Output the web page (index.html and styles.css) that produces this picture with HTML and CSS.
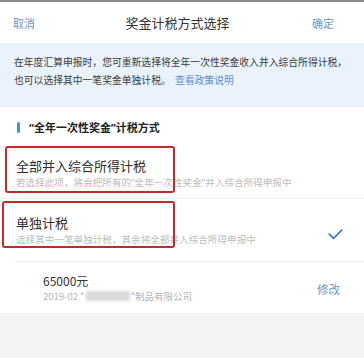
FILE: index.html
```html
<!DOCTYPE html>
<html lang="zh-CN">
<head>
<meta charset="utf-8">
<link rel="stylesheet" href="styles.css">
</head>
<body>
<div class="screen">
  <div class="topline"></div>
  <header class="navbar">
    <span class="nav-btn">取消</span>
    <span class="nav-title">奖金计税方式选择</span>
    <span class="nav-btn">确定</span>
  </header>
  <div class="notice">
    <div class="notice-line">在年度汇算申报时，您可重新选择将全年一次性奖金收入并入综合所得计税，</div>
    <div class="notice-line">也可以选择其中一笔奖金单独计税。 <span class="link">查看政策说明</span></div>
  </div>
  <div class="section-head">
    <span class="bar"></span>
    <span class="section-title"><span class="q">“</span>全年一次性奖金<span class="q">”</span>计税方式</span>
  </div>
  <div class="option option-first">
    <span class="mark mark-first"></span>
    <div class="opt-text">
      <div class="opt-title">全部并入综合所得计税</div>
      <div class="opt-sub">若选择此项，将会把所有的<span class="q">“</span>全年一次性奖金<span class="q">”</span>并入综合所得申报中</div>
    </div>
  </div>
  <div class="option option-second">
    <span class="mark mark-second"></span>
    <div class="opt-text">
      <div class="opt-title">单独计税</div>
      <div class="opt-sub">选择其中一笔单独计税，其余将全部并入综合所得申报中</div>
    </div>
    <svg class="check" width="15" height="11" viewBox="0 0 15 11"><path d="M1.2 5.2 L5.5 9.3 L13.8 1.2" fill="none" stroke="#3f7ab0" stroke-width="1.7" stroke-linecap="round" stroke-linejoin="round"/></svg>
  </div>
  <div class="item">
    <div class="item-text">
      <div class="amount">65000元</div>
      <div class="meta">2019-02 *<span class="blur"></span>*制品有限公司</div>
    </div>
    <span class="edit">修改</span>
  </div>
  <div class="footer-space"></div>
</div>
</body>
</html>
```
FILE: styles.css
```css
html, body {
  margin: 0;
  padding: 0;
  background: #ffffff;
}
.screen {
  width: 364px;
  height: 358px;
  overflow: hidden;
  font-family: "Noto Sans CJK SC", "Noto Sans", sans-serif;
  color: #333333;
  display: flex;
  flex-direction: column;
}
.q {
  font-family: "Noto Sans", "Liberation Sans", sans-serif;
}
.topline {
  height: 2px;
  background: #8d8d8d;
}
.navbar {
  height: 41px;
  display: flex;
  align-items: center;
  justify-content: space-between;
  padding: 0 30px 0 13px;
}
.nav-btn {
  font-size: 11px;
  color: #6d93cf;
}
.nav-title {
  font-size: 13px;
  color: #333333;
  margin-left: 8px;
}
.notice {
  background: #eaf3fc;
  height: 64px;
  box-sizing: border-box;
  padding: 10px 8px 0 14px;
  font-size: 9.8px;
  line-height: 18px;
  color: #3a3a3a;
  border-bottom: 1px solid #ececec;
}
.notice-line {
  white-space: nowrap;
}
.link {
  color: #5d8fd6;
  margin-left: 2px;
}
.section-head {
  height: 40px;
  display: flex;
  align-items: center;
  padding-left: 17px;
  gap: 9px;
}
.bar {
  width: 3px;
  height: 11px;
  border-radius: 2px;
  background: #4a8ee0;
}
.section-title {
  font-size: 11px;
  font-weight: 700;
  color: #222222;
}
.option {
  position: relative;
  display: flex;
  align-items: center;
  justify-content: space-between;
  padding-left: 16px;
  padding-right: 21px;
}
.option-first {
  padding-top: 10px;
  padding-bottom: 8px;
  border-bottom: 1px solid #f0f0f0;
}
.option-second {
  padding-top: 15px;
  padding-bottom: 15px;
}
.opt-title {
  font-size: 13px;
  line-height: 18px;
  color: #2e2e2e;
}
.opt-sub {
  font-size: 9.6px;
  line-height: 14px;
  color: #bdbdbd;
  white-space: nowrap;
}
.check {
  margin-top: 8px;
}
.mark {
  position: absolute;
  border: 2.5px solid #c52a2a;
  border-radius: 3px;
  box-sizing: border-box;
}
.mark-first {
  left: 5px;
  top: -1px;
  width: 170px;
  height: 47px;
}
.mark-second {
  left: 2px;
  top: 2px;
  width: 173px;
  height: 47px;
}
.item {
  margin-left: 15px;
  border-top: 1px solid #eeeeee;
  height: 52px;
  box-sizing: border-box;
  display: flex;
  align-items: center;
  justify-content: space-between;
  padding: 0 24px 0 28px;
}
.amount {
  font-size: 12px;
  line-height: 17px;
  color: #333333;
}
.meta {
  font-size: 9.5px;
  line-height: 14px;
  color: #b5b5b5;
  display: flex;
  align-items: center;
}
.blur {
  display: inline-block;
  width: 44px;
  height: 10px;
  background: #d9d9d9;
  filter: blur(1.5px);
  margin: 0 1px;
}
.edit {
  font-size: 11.5px;
  color: #6d93cf;
  margin-top: 2px;
}
.footer-space {
  flex: 1;
  background: #f4f4f6;
}
```
